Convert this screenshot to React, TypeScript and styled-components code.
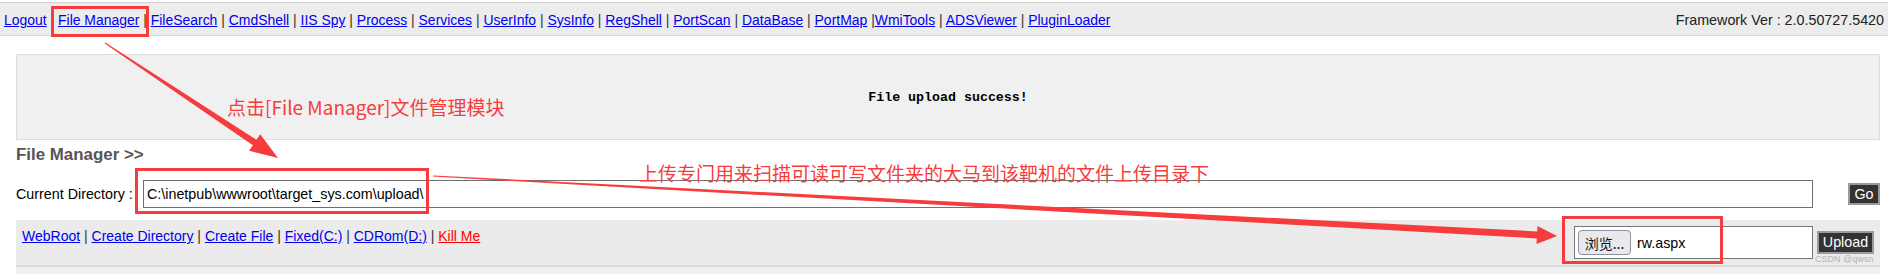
import React from "react";
import styled, { createGlobalStyle } from "styled-components";

const RED = "#f63c3c";

const GlobalStyle = createGlobalStyle`
  html, body {
    margin: 0;
    padding: 0;
    background: #fff;
  }
  body {
    font-family: "Liberation Sans", Arial, sans-serif;
    font-size: 14.3px;
    color: #000;
  }
`;

const Page = styled.div`
  position: relative;
  width: 1888px;
  height: 274px;
  overflow: hidden;
  padding-top: 2px;
  box-sizing: border-box;
`;

const NavBar = styled.div`
  display: flex;
  justify-content: space-between;
  align-items: center;
  height: 34px;
  box-sizing: border-box;
  padding: 2px 4px 0 4px;
  background: #ececec;
  border-top: 1px solid #d2d2d2;
  border-bottom: 1px solid #dadada;
  color: #333;
  font-size: 13.95px;
  white-space: pre;
`;

const Link = styled.a<{ $danger?: boolean }>`
  color: ${(p) => (p.$danger ? "#ff0000" : "#0000ee")};
  text-decoration: underline;
  cursor: pointer;
`;

const Version = styled.span`
  color: #222;
  font-size: 14.3px;
`;

const Content = styled.div`
  padding: 0 8px 0 16px;
  margin-top: 18px;
`;

const MessageBox = styled.div`
  height: 86px;
  box-sizing: border-box;
  background: #f0f0f0;
  border: 1px solid #dcdcdc;
  display: flex;
  align-items: center;
  justify-content: center;
  font-family: "Liberation Mono", "DejaVu Sans Mono", monospace;
  font-weight: bold;
  font-size: 13.3px;
  color: #000;
`;

const Title = styled.div`
  margin-top: 5px;
  font-size: 16.9px;
  line-height: 19px;
  font-weight: bold;
  color: #555;
`;

const DirRow = styled.div`
  margin-top: 16px;
  display: flex;
  align-items: center;
  height: 28px;
`;

const DirLabel = styled.span`
  width: 127px;
  flex-shrink: 0;
  white-space: pre;
`;

const PathInput = styled.input`
  flex: 1;
  height: 28px;
  box-sizing: border-box;
  border: 1px solid #707070;
  padding: 0 3px;
  font-family: "Liberation Sans", Arial, sans-serif;
  font-size: 14.3px;
  color: #000;
  outline: none;
`;

const DarkButton = styled.button<{ $w: number; $h: number }>`
  width: ${(p) => p.$w}px;
  height: ${(p) => p.$h}px;
  box-sizing: border-box;
  padding: 0;
  background: #333;
  color: #fff;
  border: 2px solid #9a9a9a;
  font-family: "Liberation Sans", Arial, sans-serif;
  font-size: 14.3px;
  line-height: 1;
`;

const GoButton = styled(DarkButton)`
  margin-left: 35px;
`;

const ToolBar = styled.div`
  margin-top: 12px;
  height: 47px;
  box-sizing: border-box;
  background: #ebebeb;
  border-bottom: 2px solid #dcdcdc;
  display: flex;
  align-items: center;
  padding: 0 6px;
`;

const ToolLinks = styled.div`
  align-self: flex-start;
  padding-top: 8px;
  white-space: pre;
  color: #333;
  font-size: 14px;
`;

const UploadForm = styled.div`
  margin-left: auto;
  display: flex;
  align-items: center;
  gap: 4px;
`;

const FileBox = styled.div`
  width: 239px;
  height: 33px;
  box-sizing: border-box;
  border: 1px solid #767676;
  background: #fff;
  display: flex;
  align-items: center;
  padding-left: 3px;
  gap: 6px;
`;

const BrowseButton = styled.span`
  width: 53px;
  height: 25px;
  box-sizing: border-box;
  border: 1px solid #8f8f9d;
  border-radius: 4px;
  background: #e9e9ed;
  display: flex;
  align-items: center;
  justify-content: center;
  font-family: "Noto Sans CJK SC", "Noto Sans", sans-serif;
  font-size: 14px;
  color: #111;
`;

const Filler = styled.div`
  height: 10px;
  background: #f0f0f0;
`;

/* ---- annotation layer (drawn over the screenshot) ---- */

const Overlay = styled.svg`
  position: absolute;
  left: 0;
  top: 0;
  pointer-events: none;
`;

const RedBox = styled.div<{ $x: number; $y: number; $w: number; $h: number }>`
  position: absolute;
  left: ${(p) => p.$x}px;
  top: ${(p) => p.$y}px;
  width: ${(p) => p.$w}px;
  height: ${(p) => p.$h}px;
  box-sizing: border-box;
  border: 3px solid ${RED};
  pointer-events: none;
`;

const Note = styled.div<{ $x: number; $y: number }>`
  position: absolute;
  left: ${(p) => p.$x}px;
  top: ${(p) => p.$y}px;
  font-family: "Noto Sans CJK SC", "Noto Sans", sans-serif;
  font-size: 19px;
  line-height: 19px;
  color: ${RED};
  white-space: nowrap;
`;

const Watermark = styled.div`
  position: absolute;
  left: 1815px;
  top: 254px;
  font-size: 9px;
  color: #b4b4b4;
  white-space: nowrap;
`;

// tapered arrow: thin at the start, thicker toward a triangular head
function arrowPoints(
  x1: number,
  y1: number,
  x2: number,
  y2: number,
  w0: number,
  w1: number,
  headLen: number,
  headW: number
) {
  const dx = x2 - x1;
  const dy = y2 - y1;
  const len = Math.hypot(dx, dy);
  const ux = dx / len;
  const uy = dy / len;
  const nx = -uy;
  const ny = ux;
  const bx = x2 - ux * headLen;
  const by = y2 - uy * headLen;
  const pts = [
    [x1 + nx * w0, y1 + ny * w0],
    [bx + nx * w1, by + ny * w1],
    [bx + nx * headW, by + ny * headW],
    [x2, y2],
    [bx - nx * headW, by - ny * headW],
    [bx - nx * w1, by - ny * w1],
    [x1 - nx * w0, y1 - ny * w0],
  ];
  return pts.map((p) => p.map((v) => v.toFixed(1)).join(",")).join(" ");
}

const navItems = [
  "File Manager",
  "FileSearch",
  "CmdShell",
  "IIS Spy",
  "Process",
  "Services",
  "UserInfo",
  "SysInfo",
  "RegShell",
  "PortScan",
  "DataBase",
  "PortMap",
];

const navTail = ["ADSViewer", "PluginLoader"];

const toolItems = ["WebRoot", "Create Directory", "Create File", "Fixed(C:)", "CDRom(D:)"];

export default function App() {
  return (
    <>
      <GlobalStyle />
      <Page>
        <NavBar>
          <span>
            <Link>Logout</Link>
            {navItems.map((item) => (
              <React.Fragment key={item}>
                {" | "}
                <Link>{item}</Link>
              </React.Fragment>
            ))}
            {" |"}
            <Link>WmiTools</Link>
            {navTail.map((item) => (
              <React.Fragment key={item}>
                {" | "}
                <Link>{item}</Link>
              </React.Fragment>
            ))}
          </span>
          <Version>Framework Ver : 2.0.50727.5420</Version>
        </NavBar>

        <Content>
          <MessageBox>File upload success!</MessageBox>
          <Title>File Manager &gt;&gt;</Title>

          <DirRow>
            <DirLabel>Current Directory : </DirLabel>
            <PathInput readOnly defaultValue={"C:\\inetpub\\wwwroot\\target_sys.com\\upload\\"} />
            <GoButton $w={32} $h={22}>Go</GoButton>
          </DirRow>

          <ToolBar>
            <ToolLinks>
              {toolItems.map((item) => (
                <React.Fragment key={item}>
                  <Link>{item}</Link>
                  {" | "}
                </React.Fragment>
              ))}
              <Link $danger>Kill Me</Link>
            </ToolLinks>
            <UploadForm>
              <FileBox>
                <BrowseButton>浏览...</BrowseButton>
                <span>rw.aspx</span>
              </FileBox>
              <DarkButton $w={57} $h={23}>Upload</DarkButton>
            </UploadForm>
          </ToolBar>
          <Filler />
        </Content>

        <Overlay width={1888} height={274} viewBox="0 0 1888 274">
          <polygon points={arrowPoints(105, 43, 278, 158, 0.6, 3.2, 28, 10)} fill={RED} />
          <polygon points={arrowPoints(433, 176, 1557, 236, 0.6, 3.5, 20, 9)} fill={RED} />
        </Overlay>

        <RedBox $x={51} $y={6} $w={98} $h={31} />
        <RedBox $x={135} $y={168} $w={294} $h={46} />
        <RedBox $x={1562} $y={216} $w={161} $h={48} />

        <Note $x={227} $y={97}>点击[File Manager]文件管理模块</Note>
        <Note $x={639} $y={163}>上传专门用来扫描可读可写文件夹的大马到该靶机的文件上传目录下</Note>

        <Watermark>CSDN @qwsn</Watermark>
      </Page>
    </>
  );
}
